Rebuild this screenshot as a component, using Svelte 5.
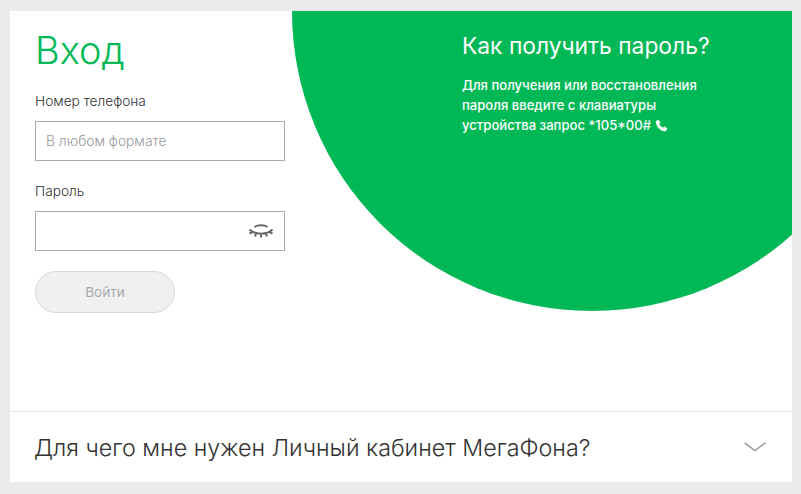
<script>
  let phone = $state("");
  let password = $state("");
</script>

<main class="page">
  <div class="card">
    <section class="login">
      <div class="circle" aria-hidden="true"></div>

      <form class="form" onsubmit={(e) => e.preventDefault()}>
        <h1>Вход</h1>
        <label class="field">
          <span>Номер телефона</span>
          <input type="text" placeholder="В любом формате" bind:value={phone} />
        </label>
        <label class="field second">
          <span>Пароль</span>
          <div class="input-wrap">
            <input type="password" bind:value={password} />
            <svg class="eye" viewBox="0 0 26 16" aria-hidden="true">
              <path d="M6.500 4C9.500 1.800 16.500 1.800 19.500 4" />
              <path d="M1.500 6.500C7 12 19 12 24.500 6.500" />
              <path d="M1.500 10.500 4.800 8.800M7 13.500 8 10.800M13 14.500v-3M19 13.500 18 10.800M24.500 10.500l-3.300-1.700" />
            </svg>
          </div>
        </label>
        <button class="submit" type="submit" disabled>Войти</button>
      </form>

      <aside class="help">
        <h2>Как получить пароль?</h2>
        <p>
          Для получения или восстановления пароля введите с клавиатуры устройства запрос *105*00#
          <svg class="phone" viewBox="0 0 12 12" aria-hidden="true">
            <path d="M1.200 1.800 3 .5l2 2.800-1.100 1.200c.5 1.300 1.800 2.800 3.400 3.500L8.500 6.800l2.900 2-1.200 2c-.4.600-1.100.8-1.800.6C4.800 10.500 1.900 7.500.8 3.600c-.2-.7 0-1.400.4-1.800Z" />
          </svg>
        </p>
      </aside>
    </section>

    <section class="faq">
      <h3>Для чего мне нужен Личный кабинет МегаФона?</h3>
      <svg class="chevron" viewBox="0 0 22 10" aria-hidden="true">
        <path d="M.5.8 11 8.600 21.500.8" />
      </svg>
    </section>
  </div>
</main>

<style>
  :global(body) {
    background: #ebebeb;
  }

  .page {
    box-sizing: border-box;
    height: 494px;
    padding: 11px 9px 12px 10px;
    font-family: Inter, Roboto, sans-serif;
    color: #333;
  }

  .card {
    display: flex;
    flex-direction: column;
    height: 471px;
    background: #fff;
    overflow: hidden;
  }

  .login {
    position: relative;
    display: flex;
    height: 400px;
    overflow: hidden;
  }

  .circle {
    position: absolute;
    left: 282px;
    top: -300px;
    width: 600px;
    height: 600px;
    border-radius: 50%;
    background: #00b956;
  }

  .form {
    position: relative;
    display: flex;
    flex-direction: column;
    width: 250px;
    margin-left: 25px;
  }

  h1 {
    margin: 14px 0 0;
    font-size: 38px;
    line-height: 50px;
    font-weight: 300;
    color: #00b956;
  }

  .field {
    display: flex;
    flex-direction: column;
    margin-top: 18px;
    font-size: 13.700px;
    line-height: 16px;
    font-weight: 300;
  }

  .field.second {
    margin-top: 22px;
  }

  .field span {
    margin-bottom: 12px;
  }

  .input-wrap {
    position: relative;
  }

  input {
    box-sizing: border-box;
    width: 250px;
    height: 40px;
    padding: 0 10px;
    border: 1px solid #aaa;
    border-radius: 0;
    outline: none;
    background: #fff;
    font: inherit;
    font-size: 13.800px;
    color: #333;
  }

  input::placeholder {
    color: #999;
    opacity: 1;
  }

  .eye {
    position: absolute;
    right: 11px;
    top: 12px;
    width: 26px;
    height: 16px;
    fill: none;
    stroke: #666;
    stroke-width: 2;
  }

  .submit {
    width: 140px;
    height: 42px;
    margin-top: 20px;
    border: 1px solid #d8d8d8;
    border-radius: 21px;
    background: #f0f0f0;
    font: inherit;
    font-size: 13.600px;
    color: #aaa;
  }

  .help {
    position: relative;
    margin-left: 177px;
    padding-top: 21px;
    width: 270px;
    color: #fff;
  }

  h2 {
    margin: 0;
    font-size: 22.800px;
    line-height: 28px;
    font-weight: 400;
  }

  .help p {
    margin: 15px 0 0;
    font-size: 13.100px;
    line-height: 20px;
    font-weight: 500;
    width: 245px;
  }

  .phone {
    width: 13px;
    height: 13px;
    vertical-align: -2px;
    fill: #fff;
  }

  .faq {
    display: flex;
    flex: 1;
    align-items: center;
    justify-content: space-between;
    padding: 1px 26px 0 24px;
    border-top: 1px solid #e6e6e6;
  }

  h3 {
    margin: 0;
    font-size: 23.300px;
    line-height: 30px;
    font-weight: 300;
    color: #333;
  }

  .chevron {
    width: 22px;
    height: 10px;
    margin-top: -1px;
    fill: none;
    stroke: #999;
    stroke-width: 1.500;
  }
</style>
